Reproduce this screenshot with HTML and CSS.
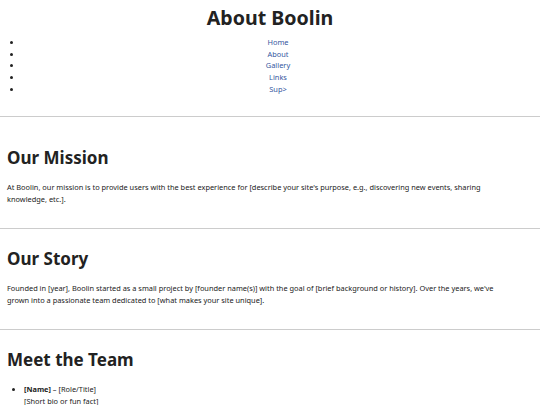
FILE: index.html
```html
<!DOCTYPE html>
<html lang="en">
<head>
<meta charset="utf-8">
<title>About Boolin</title>
<link rel="stylesheet" href="styles.css">
</head>
<body>
<header class="site-header">
  <h1 class="site-title">About Boolin</h1>
  <ul class="nav">
    <li><a href="#">Home</a></li>
    <li><a href="#">About</a></li>
    <li><a href="#">Gallery</a></li>
    <li><a href="#">Links</a></li>
    <li><a href="#">Sup&gt;</a></li>
  </ul>
</header>
<main class="content">
  <section class="block">
    <h2 class="block-title">Our Mission</h2>
    <p class="block-text">At Boolin, our mission is to provide users with the best experience for [describe your site's purpose, e.g., discovering new events, sharing knowledge, etc.].</p>
  </section>
  <section class="block">
    <h2 class="block-title">Our Story</h2>
    <p class="block-text">Founded in [year], Boolin started as a small project by [founder name(s)] with the goal of [brief background or history]. Over the years, we've grown into a passionate team dedicated to [what makes your site unique].</p>
  </section>
  <section class="block">
    <h2 class="block-title">Meet the Team</h2>
    <ul class="team">
      <li><strong>[Name]</strong> – [Role/Title]<br>[Short bio or fun fact]</li>
    </ul>
  </section>
</main>
</body>
</html>
```

FILE: styles.css
```css
html, body {
  margin: 0;
  padding: 0;
  background: #fff;
}
body {
  font-family: "Noto Sans", "Open Sans", sans-serif;
  color: #222;
}
.site-header {
  padding: 3px 0 20px;
  border-bottom: 1px solid #cccccc;
}
.site-title {
  margin: 0;
  font-size: 19.6px;
  line-height: 30px;
  text-align: center;
  font-weight: 700;
  color: #222;
}
.nav {
  margin: 4px 0 0;
  padding: 0 6px 0 22px;
  font-size: 7.4px;
  line-height: 11.7px;
  text-align: center;
}
.nav a {
  color: #3557a0;
  text-decoration: none;
}
.content {
  padding-top: 11px;
}
.block {
  padding: 0 35px 0 7px;
}
.block + .block {
  border-top: 1px solid #cccccc;
}
.block-title {
  margin: 17px 0 11px;
  font-size: 17px;
  line-height: 25px;
  font-weight: 700;
}
.block-text {
  margin: 0 0 23px;
  font-size: 7.4px;
  line-height: 12px;
}
.team {
  margin: 0;
  padding-left: 17px;
  font-size: 7.4px;
  line-height: 12px;
}
```
